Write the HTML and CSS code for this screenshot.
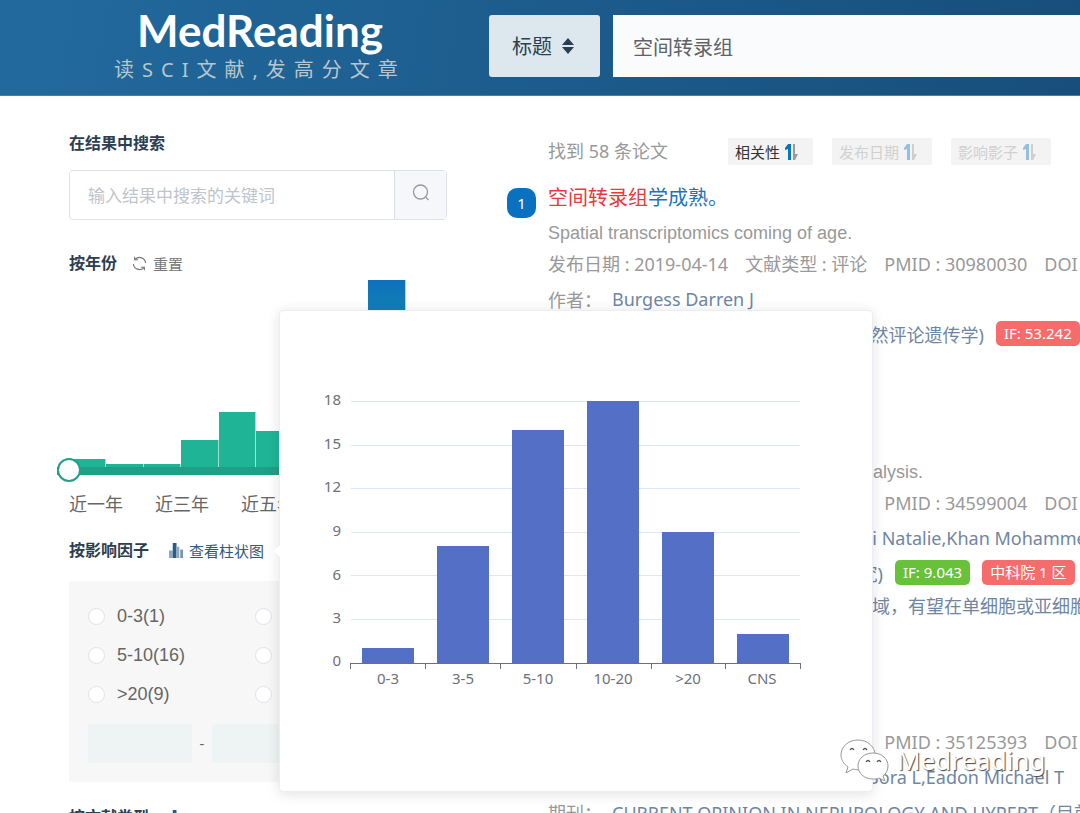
FILE: index.html
```html
<!DOCTYPE html>
<html lang="zh-CN">
<head>
<meta charset="utf-8">
<title>MedReading</title>
<link rel="stylesheet" href="styles.css">
</head>
<body>
<svg class="defs" aria-hidden="true">
  <symbol id="bars" viewBox="0 0 16 16">
    <rect x="0" y="8" width="4" height="8" fill="#8fa9bf"/>
    <rect x="4" y="0" width="4" height="16" fill="#2a5c8a"/>
    <rect x="8" y="4" width="3" height="12" fill="#8fa9bf"/>
    <rect x="12" y="7" width="3" height="9" fill="#7695b1"/>
  </symbol>
  <symbol id="sort" viewBox="0 0 14 18">
    <path d="M3 1h3v16H3V6L0 7V5z" fill="#0a74c4"/>
    <path d="M8 1h2v10h3l-3 6H8z" fill="#9a9a9a"/>
  </symbol>
</svg>

<header class="topbar">
  <div class="brand">
    <div class="brand-name">MedReading</div>
    <div class="brand-slogan">读SCI文献,发高分文章</div>
  </div>
  <form class="search">
    <div class="field">
      <select aria-label="检索字段"><option>标题</option><option>作者</option></select>
      <svg class="field-arrows" viewBox="0 0 12 16"><path d="M6 0l6 7H0zM6 16l6-7H0z" fill="#2c3e50"/></svg>
    </div>
    <input class="query" type="text" aria-label="检索词" value="空间转录组">
  </form>
</header>

<main class="page">
  <aside class="sidebar">
    <h2 class="heading">在结果中搜索</h2>
    <form class="refine">
      <input type="text" aria-label="在结果中搜索" placeholder="输入结果中搜索的关键词">
      <button type="button" aria-label="搜索">
        <svg viewBox="0 0 18 18"><circle cx="8.5" cy="8" r="7" /><path d="M13.5 13l3 3"/></svg>
      </button>
    </form>

    <div class="heading-row year-head">
      <h2 class="heading">按年份</h2>
      <button type="button" class="reset">
        <svg viewBox="0 0 16 16"><path d="M14.500 7.500A6.500 6.500 0 0 0 3.500 3.400M1.500 8.500A6.500 6.500 0 0 0 12.500 12.600M6.500 4H2.800V.8M9.500 12h3.700v3.200"/></svg>
        重置
      </button>
    </div>
    <div class="years">
      <i style="height:8px"></i><i style="height:3px"></i><i style="height:3px"></i><i style="height:27px"></i><i style="height:55px"></i><i style="height:36px"></i><i style="height:80px"></i><i style="height:120px"></i><i class="peak" style="height:187px"></i><i style="height:90px"></i>
    </div>
    <input class="range" type="range" min="0" max="10" value="0" aria-label="年份">
    <div class="quick"><a href="#y1">近一年</a><a href="#y3">近三年</a><a href="#y5">近五年</a></div>

    <div class="heading-row factor-head">
      <h2 class="heading">按影响因子</h2>
      <a class="view" href="#chart"><svg><use href="#bars"/></svg>查看柱状图</a>
      <div class="popover">
        <svg viewBox="0 0 592 480" role="img" aria-label="影响因子柱状图">
          <path class="grid" d="M71 90.500h449M71 134.500h449M71 177.500h449M71 221.500h449M71 264.500h449M71 308.500h449"/>
          <g class="bar">
            <rect x="82" y="337" width="52" height="15"/>
            <rect x="157" y="235" width="52" height="117"/>
            <rect x="232" y="119" width="52" height="233"/>
            <rect x="307" y="90" width="52" height="262"/>
            <rect x="382" y="221" width="52" height="131"/>
            <rect x="457" y="323" width="52" height="29"/>
          </g>
          <path class="axis" d="M70 352.500h451M70.500 352v6M145.500 352v6M220.500 352v6M296.500 352v6M371.500 352v6M445.500 352v6M520.500 352v6"/>
          <g class="y">
            <text x="61" y="94">18</text><text x="61" y="138">15</text><text x="61" y="181">12</text><text x="61" y="225">9</text><text x="61" y="269">6</text><text x="61" y="312">3</text><text x="61" y="355">0</text>
          </g>
          <g class="x">
            <text x="108" y="373">0-3</text><text x="183" y="373">3-5</text><text x="258" y="373">5-10</text><text x="333" y="373">10-20</text><text x="408" y="373">&gt;20</text><text x="482" y="373">CNS</text>
          </g>
        </svg>
      </div>
    </div>
    <div class="factors">
      <div class="options">
        <label><input type="radio" name="if">0-3(1)</label><label><input type="radio" name="if">3-5(8)</label>
        <label><input type="radio" name="if">5-10(16)</label><label><input type="radio" name="if">10-20(18)</label>
        <label><input type="radio" name="if">&gt;20(9)</label><label><input type="radio" name="if">CNS(2)</label>
      </div>
      <div class="between"><input type="text" aria-label="最小值"><span>-</span><input type="text" aria-label="最大值"></div>
    </div>

    <div class="heading-row">
      <h2 class="heading">按文献类型</h2>
      <a class="view" href="#types" aria-label="查看柱状图"><svg><use href="#bars"/></svg></a>
    </div>
  </aside>

  <section class="results">
    <div class="toolbar">
      <span class="count">找到 58 条论文</span>
      <div class="sorts">
        <button type="button">相关性<svg><use href="#sort"/></svg></button>
        <button type="button" class="off">发布日期<svg><use href="#sort"/></svg></button>
        <button type="button" class="off">影响影子<svg><use href="#sort"/></svg></button>
      </div>
    </div>

    <article class="item">
      <span class="number">1</span>
      <div class="body">
        <h3><a href="#p1"><em>空间转录组</em>学成熟。</a></h3>
        <p class="subtitle">Spatial transcriptomics coming of age.</p>
        <div class="meta"><span>发布日期 : 2019-04-14</span><span>文献类型 : 评论</span><span>PMID : 30980030</span><span>DOI : 10.1038</span></div>
        <div class="row authors"><span class="label">作者：</span><a href="#a1">Burgess Darren J</a></div>
        <div class="row"><span class="label">期刊：</span><a class="long" href="#j1">Nature Reviews Genetics (自然评论遗传学)</a><span class="tag">IF: 53.242</span></div>
        <p class="abstract"></p>
      </div>
    </article>

    <article class="item">
      <span class="number">2</span>
      <div class="body">
        <h3><a href="#p2"><em>空间转录组</em>分析。</a></h3>
        <p class="subtitle offset">Spatial analysis.</p>
        <div class="meta"><span>发布日期 : 2021-10-01</span><span>文献类型 : 综述</span><span>PMID : 34599004</span><span>DOI : 10.1101</span></div>
        <div class="row authors"><span class="label">作者：</span><a href="#a2"><span class="lead">Rossi</span> Natalie,Khan Mohammed</a></div>
        <div class="row"><span class="label">期刊：</span><a class="short" href="#j2">Genome Research (基因组研究)</a><span class="tag green">IF: 9.043</span><span class="tag">中科院 1 区</span></div>
        <p class="abstract">空间转录组学是一个正快速发展的新兴领域，有望在单细胞或亚细胞水平</p>
      </div>
    </article>

    <article class="item">
      <span class="number">3</span>
      <div class="body">
        <h3><a href="#p3"><em>空间转录组</em>学与肾脏。</a></h3>
        <p class="subtitle">Spatial transcriptomics and the kidney.</p>
        <div class="meta"><span>发布日期 : 2022-02-07</span><span>文献类型 : 综述</span><span>PMID : 35125393</span><span>DOI : 10.1097</span></div>
        <div class="row authors"><span class="label">作者：</span><a class="group" href="#a3">Bora L,Eadon Michael T</a></div>
        <div class="row"><span class="label">期刊：</span><a href="#j3">CURRENT OPINION IN NEPHROLOGY AND HYPERT（目前肾脏病学）</a></div>
      </div>
    </article>
  </section>
</main>

<div class="watermark">
  <svg viewBox="0 0 50 42">
    <g fill="#fff" stroke="#999" stroke-width="1">
      <path d="M18 1C8 1 1 8 1 16c0 5 3 9 7 12l-2 6 7-4c3 1 7 1 10 0 8-2 12-8 12-14C35 8 28 1 18 1z"/>
      <path d="M33 14c-9 0-15 6-15 13s6 13 15 13c2 0 4 0 6-1l6 3-2-5c3-2 5-6 5-10 0-7-6-13-15-13z"/>
    </g>
    <path d="M10 11q2-3 4 0M23 11q2-3 4 0M26 23q2-3 4 0M37 23q2-3 4 0" fill="none" stroke="#555" stroke-width="1.300"/>
  </svg>
  <span>Medreading</span>
</div>
</body>
</html>
```
FILE: styles.css
```css
* { box-sizing: border-box; }
body {
  margin: 0;
  position: relative;
  height: 100vh;
  overflow: hidden;
  background: #fff;
  color: #2c3e50;
  font: 18px "Noto Sans", "Noto Sans CJK SC", sans-serif;
}
h2, h3, p { margin: 0; }
a { color: inherit; text-decoration: none; }
button, input, select { font: inherit; color: inherit; border: 0; padding: 0; margin: 0; background: none; outline: 0; }
.defs { position: absolute; width: 0; height: 0; }

.topbar {
  display: flex;
  height: 96px;
  padding: 15px 0 0 69px;
  background: linear-gradient(100deg, #226a9e, #174e7b);
  border-bottom: 1px solid #4680aa;
}
.brand {
  flex: none;
  width: 420px;
  padding-right: 38px;
  margin-top: -15px;
  text-align: center;
}
.brand-name { font: bold 44px/60px Lato, sans-serif; color: #fff; }
.brand-slogan { font-size: 20px; line-height: 20px; letter-spacing: 8px; color: #b8c6cf; }
.search { display: flex; flex: 1; gap: 13px; height: 62px; }
.field { position: relative; flex: none; width: 111px; background: #dde8ee; border-radius: 3px; }
.field select { appearance: none; width: 100%; height: 100%; padding-left: 23px; font-size: 20px; }
.field-arrows { position: absolute; right: 26px; top: 23px; width: 12px; height: 16px; pointer-events: none; }
.query { flex: 1; min-width: 0; padding-left: 20px; font-size: 20px; color: #606266; background: #fafbfd; }

.page { display: flex; gap: 60px; padding: 32px 0 0 69px; }
.sidebar { flex: none; width: 378px; }
.heading { font-size: 16px; line-height: 30px; font-weight: bold; }
.heading-row { display: flex; align-items: center; }

.refine { display: flex; height: 50px; margin-top: 12px; border: 1px solid #dfe2ea; border-radius: 4px; }
.refine input { flex: 1; min-width: 0; padding-left: 18px; font-size: 17px; }
.refine input::placeholder { color: #c0c4cc; opacity: 1; }
.refine button { width: 52px; background: #f5f7fa; border-left: 1px solid #dcdfe6; }
.refine svg { width: 18px; height: 18px; fill: none; stroke: #999; stroke-width: 1.300; }

.year-head { margin-top: 28px; gap: 15px; }
.reset { display: flex; align-items: center; gap: 6px; font-size: 15px; color: #777; }
.reset svg { width: 15px; height: 15px; fill: none; stroke: #777; stroke-width: 1.200; }
.years { display: flex; align-items: flex-end; height: 187px; margin: 2px 4px 0 0; }
.years i { flex: 1; background: #20b496; border-right: 1px solid #a5dfd2; }
.years .peak { background: linear-gradient(#0e70bc, #20b496 130px); }
.range { appearance: none; display: block; width: 398px; height: 24px; margin: -8px 0 0 -12px; position: relative; }
.range::-webkit-slider-runnable-track { height: 8px; background: #1f9f85; }
.range::-webkit-slider-thumb {
  appearance: none;
  width: 24px;
  height: 24px;
  margin-top: -9px;
  border: 2px solid #22a085;
  border-radius: 50%;
  background: #fff;
}
.quick { display: flex; gap: 32px; margin-top: 6px; line-height: 30px; color: #666; }

.factor-head { position: relative; margin-top: 16px; }
.view { display: flex; align-items: center; gap: 5px; margin-left: 20px; font-size: 15px; color: #2c5a86; }
.view svg { width: 15px; height: 15px; }
.popover {
  position: absolute;
  z-index: 2;
  left: 210px;
  top: -225px;
  width: 594px;
  background: #fff;
  border: 1px solid #ebeef5;
  border-radius: 4px;
  box-shadow: 0 2px 14px rgba(0, 0, 0, .12);
}
.popover::before {
  content: "";
  position: absolute;
  left: -6px;
  top: 50%;
  border: 6px solid transparent;
  border-left-width: 0;
  border-right-color: #fff;
  transform: translateY(-50%);
}
.popover svg { display: block; width: 100%; }
.grid { stroke: #e0e6f1; }
.bar { fill: #5470c6; }
.axis { stroke: #6e7079; fill: none; }
.x, .y { font-size: 15px; fill: #6e7079; }
.x { text-anchor: middle; }
.y { text-anchor: end; }

.factors { margin: 16px 0 20px; padding: 16px 19px 19px; background: #f7f7f7; color: #666; }
.options { display: grid; grid-template-columns: 167px 1fr; grid-auto-rows: 39px; font-family: "Liberation Sans", sans-serif; }
.options label { display: flex; align-items: center; gap: 12px; }
.options input { appearance: none; width: 17px; height: 17px; border: 1px solid #dfe2ea; border-radius: 50%; background: #fff; }
.between { display: flex; margin-top: 10px; }
.between input { width: 104px; height: 39px; border-radius: 3px; background: #eef3f4; }
.between span { width: 20px; text-align: center; line-height: 39px; font-size: 15px; }

.results { flex: 1; min-width: 0; white-space: nowrap; color: #999; }
.toolbar { display: flex; margin-left: 41px; height: 46px; padding-top: 10px; }
.count { width: 180px; line-height: 27px; }
.sorts { display: flex; gap: 19px; }
.sorts button { display: flex; align-items: center; gap: 5px; height: 27px; padding: 0 14px 0 7px; font-size: 15px; color: #333; background: #f3f3f3; border-radius: 2px; }
.sorts svg { width: 14px; height: 18px; }
.sorts .off { color: #d0d0d0; }
.sorts .off svg { opacity: .4; }

.item { display: flex; gap: 12px; margin: 6px 0 35px; }
.item + .item { margin-top: 0; }
.number { flex: none; width: 29px; height: 30px; margin-top: 8px; border-radius: 10px; background: #0a70c0; color: #fff; font-size: 15px; line-height: 30px; text-align: center; }
.body { flex: 1; min-width: 0; }
.item h3 { font-size: 20px; line-height: 36px; font-weight: normal; color: #1a75bc; }
.item em { font-style: normal; color: #e8393c; }
.subtitle { font: 18px/34px "Liberation Sans", sans-serif; }
.offset { width: 375px; text-align: right; }
.meta { display: flex; gap: 17px; line-height: 28px; margin-bottom: 3px; }
.row { display: flex; align-items: center; height: 35px; color: #6f86a3; }
.label { flex: none; width: 64px; color: #999; }
.long { width: 372px; text-align: right; }
.short { width: 271px; text-align: right; }
.lead { display: inline-block; width: 265px; text-align: right; }
.group { width: 452px; text-align: right; }
.tag { margin-left: 12px; padding: 0 8px; border-radius: 5px; background: #f56c6c; color: #fff; font-size: 15px; line-height: 25px; }
.green { background: #67c23a; }
.abstract { height: 33px; line-height: 33px; color: #6f86a3; }

.watermark { position: absolute; z-index: 3; left: 840px; top: 739px; display: flex; gap: 7px; align-items: center; font-size: 26px; color: #fff; text-shadow: 1px 1px 1px #444; }
.watermark svg { width: 50px; height: 42px; }
```
